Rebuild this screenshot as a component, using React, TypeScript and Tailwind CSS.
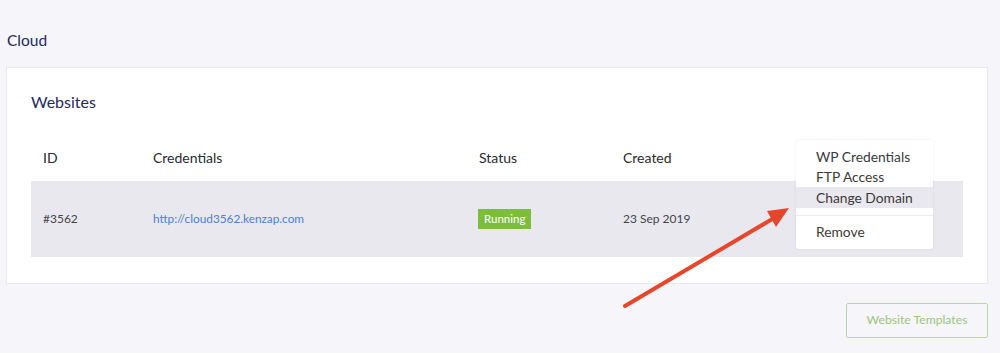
import React from "react";

export default function App() {
  const font = { fontFamily: "Lato, 'Noto Sans', sans-serif" };
  return (
    <div className="relative w-[1000px] h-[353px] overflow-hidden bg-[#f6f6fa]" style={font}>
      <div className="pl-[7px] pt-[30px] h-[67px]">
        <div className="text-[15.5px] leading-[20px] text-[#23285a]">Cloud</div>
      </div>
      <div className="ml-[6px] mr-[12px] h-[217px] bg-white border border-[#e8e8ee] px-6 pt-6">
        <div className="text-[16px] leading-[20px] text-[#23285a]">Websites</div>
        <div className="mt-[21px]">
          <div className="flex h-[48px] items-center text-[14px] text-[#2a2a2a]">
            <div className="w-[122px] pl-3">ID</div>
            <div className="w-[326px]">Credentials</div>
            <div className="w-[144px]">Status</div>
            <div>Created</div>
          </div>
          <div className="flex h-[76px] items-center bg-[#e9e8ef] text-[12px] text-[#444]">
            <div className="w-[122px] pl-3">#3562</div>
            <div className="w-[326px] text-[11.8px] text-[#4a7fd8]">http://cloud3562.kenzap.com</div>
            <div className="w-[144px]">
              <span className="inline-flex h-[20px] items-center bg-[#7dbd3c] px-[6px] ml-[-1px] text-[11.5px] text-white">Running</span>
            </div>
            <div>23 Sep 2019</div>
          </div>
        </div>
      </div>
      <div className="flex justify-end mr-[12px] mt-[19px]">
        <button className="w-[142px] h-[35px] border border-[#b9d6a3] rounded-[2px] text-[12.2px] text-[#9cc47c] bg-transparent">
          Website Templates
        </button>
      </div>

      <div className="absolute left-[796px] top-[140px] w-[137px] h-[109px] bg-white rounded-[3px] shadow-[0_0_3px_rgba(0,0,0,0.08)] py-[7px] text-[13.8px] text-[#3a3a3a]">
        <div className="h-[20px] leading-[20px] pl-5">WP Credentials</div>
        <div className="h-[20px] leading-[20px] pl-5">FTP Access</div>
        <div className="h-[21px] leading-[21px] pl-5 bg-[#e9e8ef]">Change Domain</div>
        <div className="mt-[7px] h-px bg-[#ececf0]" />
        <div className="mt-[6px] h-[20px] leading-[20px] pl-5">Remove</div>
      </div>

      <svg className="absolute left-0 top-0 pointer-events-none" width="1000" height="353">
        <line x1="625" y1="306" x2="774" y2="218" stroke="#e6472c" strokeWidth="4" strokeLinecap="round" />
        <polygon points="789,208 767,211 776,227" fill="#e6472c" />
      </svg>
    </div>
  );
}
